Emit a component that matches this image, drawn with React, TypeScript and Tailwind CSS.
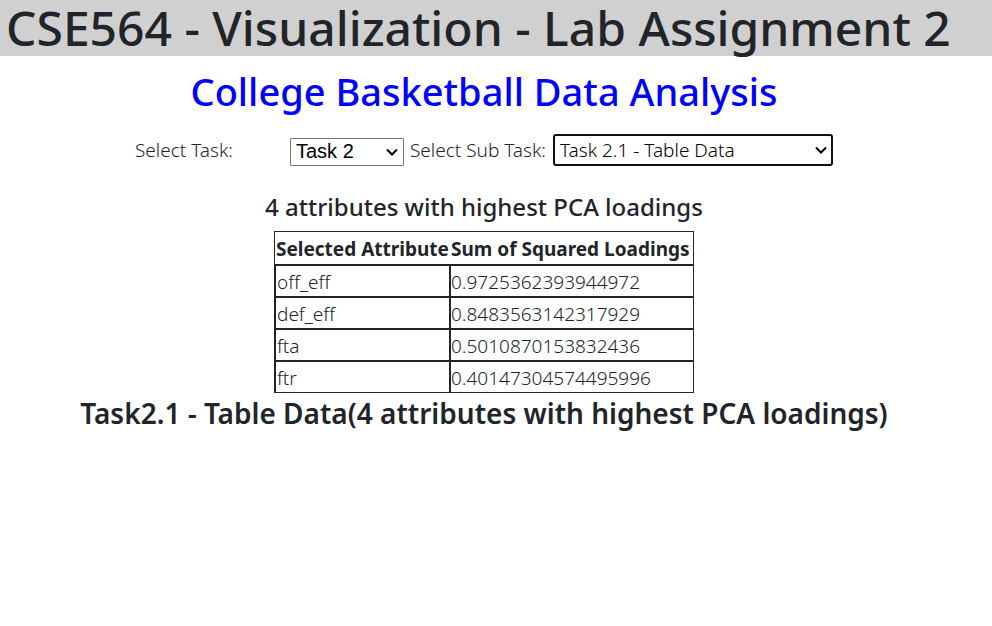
import { useState } from "react";

const rows = [
  ["off_eff", "0.9725362393944972"],
  ["def_eff", "0.8483563142317929"],
  ["fta", "0.5010870153832436"],
  ["ftr", "0.40147304574495996"],
];

function Chevron() {
  return (
    <svg className="pointer-events-none absolute top-1/2 right-[5px] -translate-y-1/2" width="14" height="10" viewBox="0 0 14 10" fill="none" stroke="#000" strokeWidth="2">
      <path d="M2 2.5 7 7.5 12 2.5" />
    </svg>
  );
}

export default function App() {
  const [task, setTask] = useState("Task 2");
  const [sub, setSub] = useState("Task 2.1 - Table Data");
  return (
    <div className="min-h-screen bg-white font-['Noto_Sans','Open_Sans',sans-serif] text-[#212529]">
      <header className="bg-[#d0d0d0] pl-[6px]">
        <h1 className="text-[48px] leading-[56px] font-medium">CSE564 - Visualization - Lab Assignment 2</h1>
      </header>
      <main className="flex flex-col items-center pr-6">
        <h2 className="mt-3 text-[38px] leading-[46px] font-medium text-[#0000ff]">College Basketball Data Analysis</h2>
        <div className="mt-5 flex items-end text-[19px] leading-8 font-light">
          <label htmlFor="task" className="w-[155px] whitespace-nowrap">Select Task:</label>
          <div className="relative">
            <select id="task" value={task} onChange={(e) => setTask(e.target.value)} className="block h-7 w-[114px] appearance-none rounded-[1px] border border-[#767676] bg-white pb-[2px] pl-[5px] font-['Liberation_Sans',sans-serif] text-[20px] leading-6 font-normal text-black">
              <option>Task 1</option>
              <option>Task 2</option>
            </select>
            <Chevron />
          </div>
          <label htmlFor="sub" className="ml-[6px] w-[143px] whitespace-nowrap">Select Sub Task:</label>
          <div className="relative">
            <select id="sub" value={sub} onChange={(e) => setSub(e.target.value)} className="block h-8 w-[280px] appearance-none rounded-[3px] border-2 border-[#101010] bg-white pl-[5px] text-[19px] leading-7 text-black">
              <option>Task 2.1 - Table Data</option>
            </select>
            <Chevron />
          </div>
        </div>
        <h3 className="mt-[25px] text-[24px] leading-8 font-medium">4 attributes with highest PCA loadings</h3>
        <table className="mt-2 w-[420px] table-fixed border-separate border-spacing-0 text-left text-[19px] leading-[28px] font-light whitespace-nowrap">
          <thead>
            <tr>
              <th className="w-[175px] border-t border-l border-[#212529] px-px pt-[3px] pb-px font-bold">Selected Attribute</th>
              <th className="border-t border-r border-[#212529] px-[2px] pt-[3px] pb-px font-bold">Sum of Squared Loadings</th>
            </tr>
          </thead>
          <tbody>
            {rows.map(([name, value]) => (
              <tr key={name} className="group">
                <td className="border-t-2 border-l-2 border-[#212529] px-px pt-[2px] group-last:border-b">{name}</td>
                <td className="border-t-2 border-r border-l-2 border-[#212529] pt-[2px] group-last:border-b">{value}</td>
              </tr>
            ))}
          </tbody>
        </table>
        <h3 className="text-[28px] leading-10 font-semibold">Task2.1 - Table Data(4 attributes with highest PCA loadings)</h3>
      </main>
    </div>
  );
}
